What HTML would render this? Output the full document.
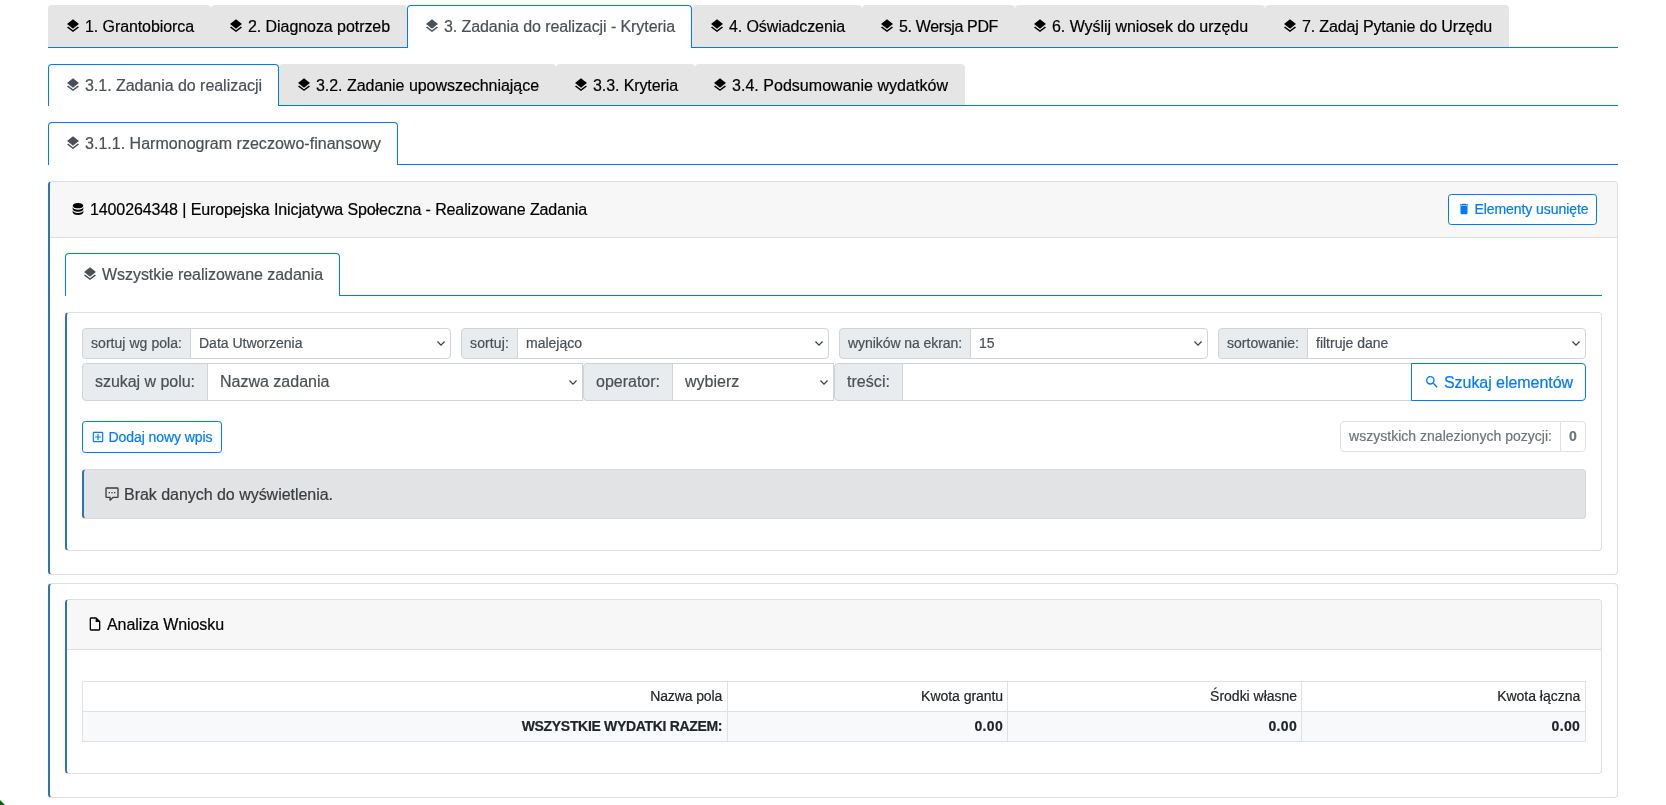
<!DOCTYPE html>
<html lang="pl">
<head>
<meta charset="utf-8">
<title>Zadania do realizacji - Kryteria</title>
<style>
*{box-sizing:border-box}
html,body{margin:0;padding:0}
body{width:1666px;height:805px;overflow:hidden;position:relative;background:#fff;
 font-family:"Liberation Sans",sans-serif;font-size:16px;line-height:24px;color:#212529;-webkit-text-stroke:0.2px}
.page{position:absolute;left:0;top:0;width:1666px;height:805px;will-change:transform;transform:translateZ(0)}
ul{list-style:none;margin:0;padding:0}
.t{white-space:nowrap;display:inline-block;position:relative}
.tab .t,.chead .title .t,.alert .t{top:1px}
svg.ic{display:inline-block;vertical-align:top;margin-top:4px;margin-right:4px;flex:none}
/* ---------- tabs ---------- */
.nav{position:absolute;border-bottom:1px solid #007bff;box-sizing:content-box}
.tab{position:absolute;top:0;height:100%;background:#e5e5e5;border-radius:4px 4px 0 0;color:#000}
.tab a{display:block;padding:9px 17px 0 17px;white-space:nowrap;height:100%}
.tab.act{background:#fff;color:#495057;border:1px solid #007bff;border-bottom:0;height:calc(100% + 1px)}
.tab.act a{padding:8px 16px 0 16px}
/* ---------- cards ---------- */
.card{position:absolute;background:#fff;border:1px solid #dfdfdf;border-left:2px solid #2a74b8;border-radius:4px}
.chead{position:absolute;left:0;top:0;right:0;background:#f7f7f7;border-bottom:1px solid #dfdfdf;border-radius:2px 3px 0 0;color:#000}
.chead .title{position:absolute;left:20px;top:15px;white-space:nowrap}
/* ---------- buttons ---------- */
.btn{position:absolute;display:block;border:1px solid #007bff;color:#007bff;background:#fff;border-radius:4px;white-space:nowrap}
.btn.sm{font-size:14px;line-height:21px;padding:4px 8px;height:31px;border-radius:3.2px}
.btn.sm svg.ic{margin-top:2.5px;margin-right:3.5px}
.btn.sm.tall{height:32px;padding-top:5px}
.btn.md{padding:6px 12px;height:38px;border-radius:0 4px 4px 0}
.btn.md .t{top:1px}
/* ---------- input groups ---------- */
.ig{position:absolute;display:flex}
.ig > *{flex:none;border:1px solid #ced4da;height:100%;white-space:nowrap;position:absolute;top:0}
.ig .lab{background:#e9ecef;color:#495057;border-radius:4px 0 0 4px;text-align:center}
.ig .sel{background:#fff;color:#495057;border-radius:0 4px 4px 0}
.ig.sm{height:31px;font-size:14px;line-height:21px}
.ig.sm .lab{padding:4px 8px}
.ig.sm .sel{padding:4px 8px}
.ig.md{height:38px;font-size:16px;line-height:24px}
.ig.md .lab{padding:6px 12px}
.ig.md .sel{padding:6px 12px}
.ig .sel.sq{border-radius:0}
.chev{position:absolute;right:5px;top:50%;margin-top:-2.5px}
.cnt{position:absolute;height:31px;font-size:14px;line-height:21px}
.cnt > span.c{position:absolute;top:0;height:31px;border:1px solid #dee2e6;padding:4px 8px;background:#fff;white-space:nowrap}
.cnt .c1{color:#6c757d;border-radius:4px 0 0 4px}
.cnt .c2{color:#6c757d;font-weight:bold;border-radius:0 4px 4px 0}
/* ---------- alert ---------- */
.alert{position:absolute;background:#e2e3e5;border:1px solid #d6d8db;border-left:2px solid #2a74b8;border-radius:4px;color:#383d41;padding:12px 20px;white-space:nowrap}
/* ---------- table ---------- */
table{position:absolute;border-collapse:collapse;font-size:14px;line-height:21px;color:#212529;table-layout:fixed}
td,th{border:1px solid #dee2e6;padding:4px 4.8px;text-align:right;font-weight:normal;white-space:nowrap;overflow:hidden}
tr.tot td{font-weight:bold;background:#f8f9fa}
tr > :nth-child(2),tr > :nth-child(3){padding-right:3.9px}
.corner{position:absolute;left:0;top:800px}

</style>
</head>
<body>
<div class="page">
<ul class="nav" style="left:48px;top:5px;width:1570px;height:42px"><li class="tab" style="left:0px;width:163px"><a><svg class="ic " width="16" height="16" viewBox="0 0 24 24" aria-hidden="true"><path fill="currentColor" d="M12,16L19.36,10.27L21,9L12,2L3,9L4.63,10.27M12,18.54L4.62,12.81L3,14.07L12,21.07L21,14.07L19.37,12.8L12,18.54Z"/></svg><span class="t " id="t0" style="letter-spacing:-0.085px">1. Grantobiorca</span></a></li><li class="tab" style="left:163px;width:196px"><a><svg class="ic " width="16" height="16" viewBox="0 0 24 24" aria-hidden="true"><path fill="currentColor" d="M12,16L19.36,10.27L21,9L12,2L3,9L4.63,10.27M12,18.54L4.62,12.81L3,14.07L12,21.07L21,14.07L19.37,12.8L12,18.54Z"/></svg><span class="t " id="t1" style="letter-spacing:-0.063px">2. Diagnoza potrzeb</span></a></li><li class="tab act" style="left:359px;width:285px"><a><svg class="ic " width="16" height="16" viewBox="0 0 24 24" aria-hidden="true"><path fill="currentColor" d="M12,16L19.36,10.27L21,9L12,2L3,9L4.63,10.27M12,18.54L4.62,12.81L3,14.07L12,21.07L21,14.07L19.37,12.8L12,18.54Z"/></svg><span class="t " id="t2" style="letter-spacing:-0.083px">3. Zadania do realizacji - Kryteria</span></a></li><li class="tab" style="left:644px;width:170px"><a><svg class="ic " width="16" height="16" viewBox="0 0 24 24" aria-hidden="true"><path fill="currentColor" d="M12,16L19.36,10.27L21,9L12,2L3,9L4.63,10.27M12,18.54L4.62,12.81L3,14.07L12,21.07L21,14.07L19.37,12.8L12,18.54Z"/></svg><span class="t " id="t3" style="letter-spacing:-0.093px">4. Oświadczenia</span></a></li><li class="tab" style="left:814px;width:153px"><a><svg class="ic " width="16" height="16" viewBox="0 0 24 24" aria-hidden="true"><path fill="currentColor" d="M12,16L19.36,10.27L21,9L12,2L3,9L4.63,10.27M12,18.54L4.62,12.81L3,14.07L12,21.07L21,14.07L19.37,12.8L12,18.54Z"/></svg><span class="t " id="t4" style="letter-spacing:-0.364px">5. Wersja PDF</span></a></li><li class="tab" style="left:967px;width:250px"><a><svg class="ic " width="16" height="16" viewBox="0 0 24 24" aria-hidden="true"><path fill="currentColor" d="M12,16L19.36,10.27L21,9L12,2L3,9L4.63,10.27M12,18.54L4.62,12.81L3,14.07L12,21.07L21,14.07L19.37,12.8L12,18.54Z"/></svg><span class="t " id="t5" style="letter-spacing:-0.047px">6. Wyślij wniosek do urzędu</span></a></li><li class="tab" style="left:1217px;width:244px"><a><svg class="ic " width="16" height="16" viewBox="0 0 24 24" aria-hidden="true"><path fill="currentColor" d="M12,16L19.36,10.27L21,9L12,2L3,9L4.63,10.27M12,18.54L4.62,12.81L3,14.07L12,21.07L21,14.07L19.37,12.8L12,18.54Z"/></svg><span class="t " id="t6" style="letter-spacing:-0.150px">7. Zadaj Pytanie do Urzędu</span></a></li></ul>
<ul class="nav" style="left:48px;top:64px;width:1570px;height:41px"><li class="tab act" style="left:0px;width:231px"><a><svg class="ic " width="16" height="16" viewBox="0 0 24 24" aria-hidden="true"><path fill="currentColor" d="M12,16L19.36,10.27L21,9L12,2L3,9L4.63,10.27M12,18.54L4.62,12.81L3,14.07L12,21.07L21,14.07L19.37,12.8L12,18.54Z"/></svg><span class="t " id="t7" style="letter-spacing:-0.034px">3.1. Zadania do realizacji</span></a></li><li class="tab" style="left:231px;width:277px"><a><svg class="ic " width="16" height="16" viewBox="0 0 24 24" aria-hidden="true"><path fill="currentColor" d="M12,16L19.36,10.27L21,9L12,2L3,9L4.63,10.27M12,18.54L4.62,12.81L3,14.07L12,21.07L21,14.07L19.37,12.8L12,18.54Z"/></svg><span class="t " id="t8" style="letter-spacing:-0.040px">3.2. Zadanie upowszechniające</span></a></li><li class="tab" style="left:508px;width:139px"><a><svg class="ic " width="16" height="16" viewBox="0 0 24 24" aria-hidden="true"><path fill="currentColor" d="M12,16L19.36,10.27L21,9L12,2L3,9L4.63,10.27M12,18.54L4.62,12.81L3,14.07L12,21.07L21,14.07L19.37,12.8L12,18.54Z"/></svg><span class="t " id="t9" style="letter-spacing:-0.097px">3.3. Kryteria</span></a></li><li class="tab" style="left:647px;width:270px"><a><svg class="ic " width="16" height="16" viewBox="0 0 24 24" aria-hidden="true"><path fill="currentColor" d="M12,16L19.36,10.27L21,9L12,2L3,9L4.63,10.27M12,18.54L4.62,12.81L3,14.07L12,21.07L21,14.07L19.37,12.8L12,18.54Z"/></svg><span class="t " id="t10" style="letter-spacing:0.029px">3.4. Podsumowanie wydatków</span></a></li></ul>
<ul class="nav" style="left:48px;top:122px;width:1570px;height:42px"><li class="tab act" style="left:0px;width:350px"><a><svg class="ic " width="16" height="16" viewBox="0 0 24 24" aria-hidden="true"><path fill="currentColor" d="M12,16L19.36,10.27L21,9L12,2L3,9L4.63,10.27M12,18.54L4.62,12.81L3,14.07L12,21.07L21,14.07L19.37,12.8L12,18.54Z"/></svg><span class="t " id="t11" style="letter-spacing:0.021px">3.1.1. Harmonogram rzeczowo-finansowy</span></a></li></ul>
<div class="card" style="left:48px;top:181px;width:1570px;height:394px"><div class="chead" style="height:56px"><div class="title"><svg class="ic " width="16" height="16" viewBox="0 0 24 24" aria-hidden="true"><path fill="currentColor" d="M12,3C7.58,3 4,4.79 4,7C4,9.21 7.58,11 12,11C16.42,11 20,9.21 20,7C20,4.79 16.42,3 12,3M4,9V12C4,14.21 7.58,16 12,16C16.42,16 20,14.21 20,12V9C20,11.21 16.42,13 12,13C7.58,13 4,11.21 4,9M4,14V17C4,19.21 7.58,21 12,21C16.42,21 20,19.21 20,17V14C20,16.21 16.42,18 12,18C7.58,18 4,16.21 4,14Z"/></svg><span class="t " id="t12" style="letter-spacing:-0.107px">1400264348 | Europejska Inicjatywa Społeczna - Realizowane Zadania</span></div><a class="btn sm" style="left:1398px;top:12px;width:149px"><svg class="ic " width="14" height="14" viewBox="0 0 24 24" aria-hidden="true"><path fill="currentColor" d="M19,4H15.5L14.5,3H9.5L8.5,4H5V6H19M6,19A2,2 0 0,0 8,21H16A2,2 0 0,0 18,19V7H6V19Z"/></svg><span class="t " id="t13" style="letter-spacing:-0.070px">Elementy usunięte</span></a></div></div>
<ul class="nav" style="left:65px;top:253px;width:1537px;height:42px"><li class="tab act" style="left:0px;width:275px"><a><svg class="ic " width="16" height="16" viewBox="0 0 24 24" aria-hidden="true"><path fill="currentColor" d="M12,16L19.36,10.27L21,9L12,2L3,9L4.63,10.27M12,18.54L4.62,12.81L3,14.07L12,21.07L21,14.07L19.37,12.8L12,18.54Z"/></svg><span class="t " id="t14" style="letter-spacing:-0.046px">Wszystkie realizowane zadania</span></a></li></ul>
<div class="card" style="left:65px;top:312px;width:1537px;height:239px"></div>
<div class="ig sm" style="left:82px;top:328px;width:369px"><span class="lab" style="left:0;width:109px"><span class="t " id="t15" style="letter-spacing:0.048px">sortuj wg pola:</span></span><span class="sel" style="left:108px;width:261px"><span class="t " id="t16" style="letter-spacing:0px">Data Utworzenia</span><svg class="chev" width="8" height="5" viewBox="0 0 8 5" aria-hidden="true"><path d="M0.45 0.55 L4 4.1 L7.55 0.55" fill="none" stroke="#3a4047" stroke-width="1.25"/></svg></span></div>
<div class="ig sm" style="left:461px;top:328px;width:368px"><span class="lab" style="left:0;width:57px"><span class="t " id="t17" style="letter-spacing:0.125px">sortuj:</span></span><span class="sel" style="left:56px;width:312px"><span class="t " id="t18" style="letter-spacing:0px">malejąco</span><svg class="chev" width="8" height="5" viewBox="0 0 8 5" aria-hidden="true"><path d="M0.45 0.55 L4 4.1 L7.55 0.55" fill="none" stroke="#3a4047" stroke-width="1.25"/></svg></span></div>
<div class="ig sm" style="left:839px;top:328px;width:369px"><span class="lab" style="left:0;width:132px"><span class="t " id="t19" style="letter-spacing:-0.069px">wyników na ekran:</span></span><span class="sel" style="left:131px;width:238px"><span class="t " id="t20" style="letter-spacing:0px">15</span><svg class="chev" width="8" height="5" viewBox="0 0 8 5" aria-hidden="true"><path d="M0.45 0.55 L4 4.1 L7.55 0.55" fill="none" stroke="#3a4047" stroke-width="1.25"/></svg></span></div>
<div class="ig sm" style="left:1218px;top:328px;width:368px"><span class="lab" style="left:0;width:90px"><span class="t " id="t21" style="letter-spacing:0.037px">sortowanie:</span></span><span class="sel" style="left:89px;width:279px"><span class="t " id="t22" style="letter-spacing:0px">filtruje dane</span><svg class="chev" width="8" height="5" viewBox="0 0 8 5" aria-hidden="true"><path d="M0.45 0.55 L4 4.1 L7.55 0.55" fill="none" stroke="#3a4047" stroke-width="1.25"/></svg></span></div>
<div class="ig md" style="left:82px;top:363px;width:501px"><span class="lab" style="left:0;width:126px"><span class="t " id="t23" style="letter-spacing:-0.036px">szukaj w polu:</span></span><span class="sel sq" style="left:125px;width:376px"><span class="t " id="t24" style="letter-spacing:0px">Nazwa zadania</span><svg class="chev" width="8" height="5" viewBox="0 0 8 5" aria-hidden="true"><path d="M0.45 0.55 L4 4.1 L7.55 0.55" fill="none" stroke="#3a4047" stroke-width="1.25"/></svg></span></div>
<div class="ig md" style="left:583px;top:363px;width:251px"><span class="lab" style="left:0;width:90px"><span class="t " id="t25" style="letter-spacing:-0.005px">operator:</span></span><span class="sel sq" style="left:89px;width:162px"><span class="t " id="t26" style="letter-spacing:0px">wybierz</span><svg class="chev" width="8" height="5" viewBox="0 0 8 5" aria-hidden="true"><path d="M0.45 0.55 L4 4.1 L7.55 0.55" fill="none" stroke="#3a4047" stroke-width="1.25"/></svg></span></div>
<div class="ig md" style="left:834px;top:363px;width:578px"><span class="lab" style="left:0;width:69px"><span class="t " id="t27" style="letter-spacing:0.047px">treści:</span></span><span class="sel sq" style="left:68px;width:510px"></span></div>
<a class="btn md" style="left:1411px;top:363px;width:175px"><svg class="ic " width="16" height="16" viewBox="0 0 24 24" aria-hidden="true"><path fill="currentColor" d="M9.5,3A6.5,6.5 0 0,1 16,9.5C16,11.11 15.41,12.59 14.44,13.73L14.71,14H15.5L20.5,19L19,20.5L14,15.5V14.71L13.73,14.44C12.59,15.41 11.11,16 9.5,16A6.5,6.5 0 0,1 3,9.5A6.5,6.5 0 0,1 9.5,3M9.5,5C7,5 5,7 5,9.5C5,12 7,14 9.5,14C12,14 14,12 14,9.5C14,7 12,5 9.5,5Z"/></svg><span class="t " id="t28" style="letter-spacing:-0.053px">Szukaj elementów</span></a>
<a class="btn sm tall" style="left:82px;top:421px;width:140px"><svg class="ic " width="14" height="14" viewBox="0 0 24 24" aria-hidden="true"><path fill="currentColor" d="M19,19V5H5V19H19M19,3A2,2 0 0,1 21,5V19A2,2 0 0,1 19,21H5A2,2 0 0,1 3,19V5C3,3.89 3.9,3 5,3H19M11,7H13V11H17V13H13V17H11V13H7V11H11V7Z"/></svg><span class="t " id="t29" style="letter-spacing:-0.071px">Dodaj nowy wpis</span></a>
<div class="cnt" style="left:1340px;top:421px;width:246px"><span class="c c1" style="left:0;width:221px"><span class="t " id="t30" style="letter-spacing:0.022px">wszystkich znalezionych pozycji:</span></span><span class="c c2" style="left:220px;width:26px"><span class="t " id="t31" style="letter-spacing:0px">0</span></span></div>
<div class="alert" style="left:82px;top:469px;width:1504px;height:50px"><svg class="ic " width="16" height="16" viewBox="0 0 24 24" aria-hidden="true"><path fill="currentColor" d="M9,22A1,1 0 0,1 8,21V18H4A2,2 0 0,1 2,16V4C2,2.89 2.9,2 4,2H20A2,2 0 0,1 22,4V16A2,2 0 0,1 20,18H13.9L10.2,21.71C10,21.9 9.75,22 9.5,22H9M10,16V19.08L13.08,16H20V4H4V16H10M17,11H15V9H17V11M13,11H11V9H13V11M9,11H7V9H9V11Z"/></svg><span class="t " id="t32" style="letter-spacing:-0.032px">Brak danych do wyświetlenia.</span></div>
<div class="card" style="left:48px;top:583px;width:1570px;height:215px"></div>
<div class="card" style="left:65px;top:599px;width:1537px;height:175px"><div class="chead" style="height:50px"><div class="title" style="top:12px"><svg class="ic " width="16" height="16" viewBox="0 0 24 24" aria-hidden="true"><path fill="currentColor" d="M14,2H6A2,2 0 0,0 4,4V20A2,2 0 0,0 6,22H18A2,2 0 0,0 20,20V8L14,2M18,20H6V4H13V9H18V20Z"/></svg><span class="t " id="t33" style="letter-spacing:-0.085px">Analiza Wniosku</span></div></div></div>
<table style="left:82px;top:681px;width:1503px"><colgroup><col style="width:645px"><col style="width:280px"><col style="width:294px"><col style="width:284px"></colgroup><tr><th><span class="t " id="t34" style="letter-spacing:-0.116px">Nazwa pola</span></th><th><span class="t " id="t35" style="letter-spacing:-0.042px">Kwota grantu</span></th><th><span class="t " id="t36" style="letter-spacing:-0.012px">Środki własne</span></th><th><span class="t " id="t37" style="letter-spacing:-0.023px">Kwota łączna</span></th></tr><tr class="tot"><td><span class="t " id="t38" style="letter-spacing:-0.320px">WSZYSTKIE WYDATKI RAZEM:</span></td><td><span class="t " id="t39" style="letter-spacing:0.338px">0.00</span></td><td><span class="t " id="t40" style="letter-spacing:0.338px">0.00</span></td><td><span class="t " id="t41" style="letter-spacing:0.338px">0.00</span></td></tr></table>
<svg class="corner" width="6" height="5" viewBox="0 0 6 5" aria-hidden="true"><polygon points="0,0 5,5 0,5" fill="#006400"/></svg>
</div>
</body>
</html>
